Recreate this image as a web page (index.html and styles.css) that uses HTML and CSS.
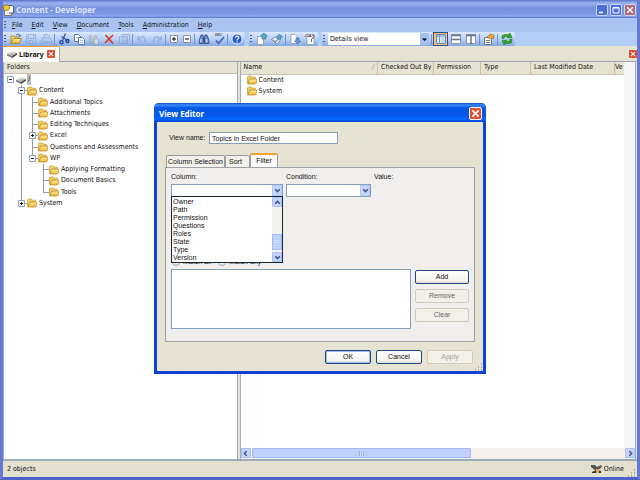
FILE: index.html
```html
<!DOCTYPE html>
<html lang="en">
<head>
<meta charset="utf-8">
<title>Content - Developer</title>
<link rel="stylesheet" href="styles.css">
</head>
<body>
<svg class="defs" aria-hidden="true">
  <defs>
    <linearGradient id="gold" x1="0" y1="0" x2="0" y2="1"><stop offset="0" stop-color="#fff3a8"/><stop offset="1" stop-color="#eeb32c"/></linearGradient>
    <symbol id="folder" viewBox="0 0 10 10"><path d="M.5 8.5V2L1.3 1h3l1 1.2h3V4H3L1.2 8.8z" fill="#f5cf62" stroke="#c8982c" stroke-width=".7"/><path d="M1 9 2.6 4.2 9.6 4 9.2 8.2 8.4 9z" fill="url(#gold)" stroke="#b88722" stroke-width=".7"/></symbol>
    <symbol id="drive" viewBox="0 0 10 10"><path d="M0 5 5 2.2 10 4 5 7z" fill="#b9b9b5"/><path d="M0 5 5 7v2L0 6.5z" fill="#777"/><path d="m5 7 5-3v1.8L5 9z" fill="#444"/><path d="m2.4 4.6 2.8-1.4 2 .8" stroke="#eee" fill="none"/></symbol>
    <symbol id="plus" viewBox="0 0 7 7"><path d="M.5.5h6v6h-6z" fill="#fff" stroke="#8aa4c0"/><path d="M2 3.5h3M3.5 2v3" stroke="#222"/></symbol>
    <symbol id="minus" viewBox="0 0 7 7"><path d="M.5.5h6v6h-6z" fill="#fff" stroke="#8aa4c0"/><path d="M2 3.5h3" stroke="#222"/></symbol>
    <symbol id="down" viewBox="0 0 7 7"><path d="m1.2 2.3 2.3 2.3 2.3-2.3" fill="none" stroke="#3d5385" stroke-width="1.5"/></symbol>
    <symbol id="close" viewBox="0 0 8 8"><path d="m1.2 1.2 5.6 5.6m0-5.6L1.2 6.8" stroke="#fff" stroke-width="1.4"/></symbol>
    <symbol id="page" viewBox="0 0 12 12"><path d="M1.5 3.5h4l2 2v6h-6z" fill="#fff" stroke="#8899ac" stroke-width=".8"/></symbol>
    <symbol id="grip" viewBox="0 0 8 8"><path d="M6 1h1M6 4h1M3 4h1M6 7h1M3 7h1M0 7h1" stroke="#9c9a88" stroke-width="1.4"/></symbol>
  </defs>
</svg>

<div class="window">
  <header class="titlebar">
    <svg class="app-icon" viewBox="0 0 11 12"><path d="M1.5 3.5h7v8h-7z" fill="#eee" stroke="#777"/><path d="M4 1.5h5l1.5 1.5v6H6" fill="#fff" stroke="#555"/><path d="M0 2 5 .8 7 4 5.5 6 1 6.5z" fill="#f5c52c" stroke="#8c6a10" stroke-width=".7"/></svg>
    <h1>Content - Developer</h1>
    <button class="win-btn" aria-label="Minimize"><svg viewBox="0 0 8 8"><path d="M1 6.5h4" stroke="#fff" stroke-width="1.6"/></svg></button>
    <button class="win-btn" aria-label="Maximize"><svg viewBox="0 0 8 8"><path d="M1 1.5h6v5.5H1zM1 2h6" fill="none" stroke="#fff"/></svg></button>
    <button class="win-btn dim-close" aria-label="Close"><svg viewBox="0 0 8 8"><use href="#close"/></svg></button>
  </header>

  <nav class="menubar">
    <i class="handle"></i>
    <button><u>F</u>ile</button><button><u>E</u>dit</button><button><u>V</u>iew</button><button><u>D</u>ocument</button><button><u>T</u>ools</button><button><u>A</u>dministration</button><button><u>H</u>elp</button>
  </nav>

  <div class="toolbars">
    <div class="toolbar">
      <i class="handle"></i>
      <button aria-label="Open"><svg viewBox="0 0 12 12"><path d="M1 10V3h3l1 1h4v2H4z" fill="#f7d56b" stroke="#a97b18" stroke-width=".8"/><path d="m1 10.5 2.5-5h8L9 10.5z" fill="url(#gold)" stroke="#a97b18" stroke-width=".8"/><path d="M6 2c2-1.6 4-.6 4 1m-1.3-.6L10 3.5l1-1.5" fill="none" stroke="#38659e"/></svg></button>
      <button aria-label="Save"><svg class="off" viewBox="0 0 12 12"><path d="M1.5 1.5h9v9h-9zM3.5 1.5v4h5v-4M4 10.5v-3h4v3" fill="#b3c6e8" stroke="#7e99c9"/></svg></button>
      <button aria-label="Save all"><svg class="off" viewBox="0 0 12 12"><path d="M2 5h8l1.500 2v3h-9zM4 5V1.500h4l1 1V5M4 8.500h6" fill="#bccdea" stroke="#7e99c9"/></svg></button>
      <i class="sep"></i>
      <button aria-label="Cut"><svg viewBox="0 0 12 12"><path d="m7.500.5-3 7M3.500 3.500l6 4" stroke="#2c55a8" stroke-width="1.300"/><circle cx="3.500" cy="9.200" r="1.600" fill="none" stroke="#173e96" stroke-width="1.300"/><circle cx="9.500" cy="8" r="1.500" fill="none" stroke="#173e96" stroke-width="1.300"/></svg></button>
      <button aria-label="Copy"><svg viewBox="0 0 12 12"><path d="M1.500 1.500h4l2 2v5h-6z" fill="#fff" stroke="#5278b5"/><path d="M5.500 4.500h4l2 2v5h-6z" fill="#fff" stroke="#5278b5"/><path d="M7 7.500h3M7 9.500h3M3 4.500h2" stroke="#7b9ccf" stroke-width=".7"/></svg></button>
      <button aria-label="Paste"><svg class="off" viewBox="0 0 12 12"><path d="M1.500 2.500h7v8h-7z" fill="#b8b8b0" stroke="#999"/><path d="M3.500 1.500h3v2h-3z" fill="#ddd"/><path d="M6 6h4.500v5.500H6z" fill="#eee" stroke="#999"/></svg></button>
      <button aria-label="Delete"><svg viewBox="0 0 12 12"><path d="m2.500 2 7.500 8.500M10 2 2 10" stroke="#d8381c" stroke-width="1.600"/></svg></button>
      <button aria-label="Properties"><svg class="off" viewBox="0 0 12 12"><path d="M1.500 3.500h8v7h-8zM3.500 1.500h8v7" fill="#bdcdea" stroke="#7790bd"/><circle cx="6" cy="7" r="2" fill="none" stroke="#7790bd"/></svg></button>
      <i class="sep"></i>
      <button aria-label="Undo"><svg class="off" viewBox="0 0 12 12"><path d="M2 3v4h4M2.500 6.500C5 2 11 4 9 9" fill="none" stroke="#6c8cc9" stroke-width="1.200"/></svg></button>
      <button aria-label="Redo"><svg class="off" viewBox="0 0 12 12"><path d="M10 3v4H6M9.500 6.500C7 2 1 4 3 9" fill="none" stroke="#6c8cc9" stroke-width="1.200"/></svg></button>
      <i class="sep"></i>
      <button class="narrow" aria-label="Expand"><svg viewBox="0 0 12 12"><path d="M2.500 2.500h7v7h-7z" fill="#fff" stroke="#8a8f94"/><path d="M4 6h4M6 4v4" stroke="#000"/></svg></button>
      <button class="narrow" aria-label="Collapse"><svg viewBox="0 0 12 12"><path d="M2.500 2.500h7v7h-7z" fill="#fff" stroke="#8a8f94"/><path d="M4 6h4" stroke="#000"/></svg></button>
      <i class="sep"></i>
      <button aria-label="Find"><svg viewBox="0 0 12 12"><path d="M3 2h2l.5 4v4.500H1.300V7zM7 2h2l1.800 5v3.500H6.500V6z" fill="#6f93cd" stroke="#27457c" stroke-width=".8"/><path d="M3 6 2.500 9M8.500 6l.5 3" stroke="#fff" stroke-width=".8"/><path d="M5 5h2" stroke="#27457c"/></svg></button>
      <button aria-label="Spelling"><span class="abc">ABC</span><svg viewBox="0 0 12 12"><path d="m3 7.500 2.500 3L11 4" fill="none" stroke="#3b66c8" stroke-width="1.700"/></svg></button>
      <i class="sep"></i>
      <button aria-label="Help"><svg viewBox="0 0 12 12"><circle cx="6" cy="6" r="5" fill="#235bd0" stroke="#e5edfa"/><path d="M4.500 4.800c0-2.200 3.200-2 3.200-.1C7.700 6 6 5.800 6 7.500M6 8.300v1.200" stroke="#fff" stroke-width="1.200" fill="none"/></svg></button>
    </div>
    <div class="toolbar">
      <i class="handle"></i>
      <button aria-label="Check in"><svg viewBox="0 0 12 12"><use href="#page"/><path d="M6 6V3H4.500L8 0l3.500 3H10v3z" fill="#5da6c9" stroke="#32728f" stroke-width=".6"/></svg></button>
      <button aria-label="Check in all"><svg viewBox="0 0 12 12"><path d="M.5 6.500 4 4l4 2-3 3zM3 8l3 3 3-3V4" fill="#edf0f3" stroke="#67798d" stroke-width=".8"/><path d="M7 6V4H5.500L8.500 1l3 3H10v2z" fill="#5da6c9" stroke="#32728f" stroke-width=".6"/></svg></button>
      <i class="sep"></i>
      <button aria-label="Check out"><svg viewBox="0 0 12 12"><path d="M2 1.500h4l2 2v7H2z" fill="#fff" stroke="#8899ac" stroke-width=".8"/><path d="M7 5v3H5.500L8.500 11 11.500 8H10V5z" fill="#5d9fd0" stroke="#32608f" stroke-width=".6"/></svg></button>
      <button aria-label="Undo check out"><svg viewBox="0 0 12 12"><path d="M3 3.500h5l2 2v6H3z" fill="#fff" stroke="#8899ac" stroke-width=".8"/><path d="M1 4c1-3 4-3 5-1M6.500 1v2.500H4" fill="none" stroke="#8a5a49"/><path d="M8 2h2v2.500L7.500 6v3" stroke="#444" stroke-width=".8" fill="none"/></svg></button>
    </div>
    <div class="toolbar views">
      <i class="handle"></i>
      <div class="combo view-combo">
        <select aria-label="View"><option>Details view</option></select>
        <span class="flat-arrow"><svg viewBox="0 0 7 7"><path d="M1 2.500h5L3.500 5z"/></svg></span>
      </div>
      <i class="sep"></i>
      <button class="pressed" aria-label="Folders pane"><svg viewBox="0 0 12 12"><path d="M1.500 1.500h9v9h-9z" fill="#dce8fa" stroke="#6d8bbd"/><path d="M4.500 2v9M2 3h9" stroke="#7891bd"/><path d="M6 5h4M6 7h4M6 9h4" stroke="#9db2d6" stroke-width=".6"/></svg></button>
      <button aria-label="Split horizontally"><svg viewBox="0 0 12 12"><path d="M1.500 1.500h9v9h-9z" fill="#fff" stroke="#8a97ab"/><path d="M1 2.500h10M1 6.500h10" stroke="#66758c" stroke-width="1.500"/></svg></button>
      <button aria-label="Split vertically"><svg viewBox="0 0 12 12"><path d="M1.500 1.500h9v9h-9z" fill="#fff" stroke="#8a97ab"/><path d="M1 2.500h10M6 2v9" stroke="#66758c" stroke-width="1.500"/></svg></button>
      <i class="sep"></i>
      <button aria-label="View properties"><svg viewBox="0 0 12 12"><path d="M1.500 4.500h7v7h-7z" fill="#fff" stroke="#6e7684"/><path d="M3 7.500h4M3 9.500h4" stroke="#6e7684"/><path d="M4 4 7 1l4 1v3L8 6z" fill="#eda934" stroke="#87622a" stroke-width=".6"/></svg></button>
      <i class="sep"></i>
      <button aria-label="Refresh"><svg viewBox="0 0 12 12"><path d="M1 5.500V3l2-1.500h4.500L9 0l2 4.500L6 5l1.500-1.500H4L3 5.500z" fill="#35a82b" stroke="#14731a" stroke-width=".5"/><path d="M11 6v3l-2 1.500H4.500L3 12 1 7.500 6 7 4.500 8.500H8L9 6z" fill="#35a82b" stroke="#14731a" stroke-width=".5"/></svg></button>
    </div>
  </div>

  <div class="doc-tabs">
    <div class="doc-tab"><svg class="ico"><use href="#drive"/></svg><strong>Library</strong><button class="red-x" aria-label="Close tab"><svg viewBox="0 0 8 8"><use href="#close"/></svg></button></div>
    <button class="red-x" aria-label="Close pane"><svg viewBox="0 0 8 8"><use href="#close"/></svg></button>
  </div>

  <main class="panes">
    <section class="folders">
      <h2 class="head">Folders</h2>
      <ul class="tree">
        <li><i class="g"><svg><use href="#minus"/></svg></i><svg class="ico"><use href="#drive"/></svg><span class="selected">/</span></li>
        <li><i class="g t"><svg><use href="#minus"/></svg></i><svg class="ico"><use href="#folder"/></svg><span>Content</span></li>
        <li><i class="g v"></i><i class="g t"></i><svg class="ico"><use href="#folder"/></svg><span>Additional Topics</span></li>
        <li><i class="g v"></i><i class="g t"></i><svg class="ico"><use href="#folder"/></svg><span>Attachments</span></li>
        <li><i class="g v"></i><i class="g t"></i><svg class="ico"><use href="#folder"/></svg><span>Editing Techniques</span></li>
        <li><i class="g v"></i><i class="g t"><svg><use href="#plus"/></svg></i><svg class="ico"><use href="#folder"/></svg><span>Excel</span></li>
        <li><i class="g v"></i><i class="g t"></i><svg class="ico"><use href="#folder"/></svg><span>Questions and Assessments</span></li>
        <li><i class="g v"></i><i class="g l"><svg><use href="#minus"/></svg></i><svg class="ico"><use href="#folder"/></svg><span>WP</span></li>
        <li><i class="g v"></i><i class="g"></i><i class="g t"></i><svg class="ico"><use href="#folder"/></svg><span>Applying Formatting</span></li>
        <li><i class="g v"></i><i class="g"></i><i class="g t"></i><svg class="ico"><use href="#folder"/></svg><span>Document Basics</span></li>
        <li><i class="g v"></i><i class="g"></i><i class="g l"></i><svg class="ico"><use href="#folder"/></svg><span>Tools</span></li>
        <li><i class="g l"><svg><use href="#plus"/></svg></i><svg class="ico"><use href="#folder"/></svg><span>System</span></li>
      </ul>
    </section>

    <section class="contents">
      <div class="list-area">
        <div class="list">
        <table>
          <colgroup><col class="c-name"><col class="c-out"><col class="c-perm"><col class="c-type"><col class="c-mod"><col></colgroup>
          <thead><tr><th><span class="sorted">Name<i>/</i></span></th><th>Checked Out By</th><th>Permission</th><th>Type</th><th>Last Modified Date</th><th>Ve</th></tr></thead>
          <tbody>
            <tr><td colspan="6"><span class="item"><svg class="ico"><use href="#folder"/></svg>Content</span></td></tr>
            <tr><td colspan="6"><span class="item"><svg class="ico"><use href="#folder"/></svg>System</span></td></tr>
          </tbody>
        </table>
        </div>
        <div class="vtrack"></div>
      </div>
      <div class="hscroll">
        <button class="sb" aria-label="Scroll left"><svg class="left" viewBox="0 0 7 7"><use href="#down"/></svg></button>
        <div class="track"><div class="thumb"><i></i></div></div>
        <button class="sb" aria-label="Scroll right"><svg class="right" viewBox="0 0 7 7"><use href="#down"/></svg></button>
      </div>
    </section>
  </main>

  <footer class="status">
    <span>2 objects</span>
    <span class="online"><svg viewBox="0 0 11 10"><path d="M0 1h4l2 2 4-2 1 2-4 3H4L0 3z" fill="#555"/><path d="m1 8 4-2 5 1v2H1z" fill="#333"/><path d="M5 5h3v4H5z" fill="#e8a43a"/></svg>Online</span>
    <svg class="size-grip"><use href="#grip"/></svg>
  </footer>
</div>

<div class="dialog" role="dialog" aria-labelledby="dlg-title">
  <header class="dlg-title">
    <h2 id="dlg-title">View Editor</h2>
    <button class="dlg-close" aria-label="Close"><svg viewBox="0 0 8 8"><use href="#close"/></svg></button>
  </header>
  <form class="dlg-body">
    <div class="name-row">
      <label for="view-name">View name:</label>
      <input id="view-name" type="text" value="Topics in Excel Folder">
    </div>
    <div class="tabs" role="tablist">
      <button type="button" role="tab" class="columns">Column Selection</button>
      <button type="button" role="tab" class="sort">Sort</button>
      <button type="button" role="tab" class="active" aria-selected="true">Filter</button>
    </div>
    <div class="tab-panel" role="tabpanel">
      <div class="criteria">
        <div class="field column-field">
          <label for="column">Column:</label>
          <div class="combo xp"><select id="column"><option></option></select><span class="xp-arrow"><svg><use href="#down"/></svg></span></div>
          <div class="dropdown">
            <ul role="listbox" aria-label="Columns">
              <li role="option">Owner</li><li role="option">Path</li><li role="option">Permission</li><li role="option">Questions</li><li role="option">Roles</li><li role="option">State</li><li role="option">Type</li><li role="option">Version</li>
            </ul>
            <div class="vscroll">
              <span class="sb"><svg class="up" viewBox="0 0 7 7"><use href="#down"/></svg></span>
              <span class="vthumb"></span>
              <span class="sb"><svg viewBox="0 0 7 7"><use href="#down"/></svg></span>
            </div>
          </div>
        </div>
        <div class="field cond-field">
          <label for="condition">Condition:</label>
          <div class="combo xp"><select id="condition"><option></option></select><span class="xp-arrow"><svg><use href="#down"/></svg></span></div>
        </div>
        <div class="field"><span>Value:</span></div>
      </div>
      <div class="match">
        <label><input type="radio" name="match" checked>Match all</label>
        <label><input type="radio" name="match">Match any</label>
      </div>
      <div class="filters">
        <div class="filter-list" role="listbox" aria-label="Filters"></div>
        <div class="side">
          <button type="button" class="btn">Add</button>
          <button type="button" class="btn muted">Remove</button>
          <button type="button" class="btn muted">Clear</button>
        </div>
      </div>
    </div>
    <div class="actions">
      <button type="button" class="btn default">OK</button>
      <button type="button" class="btn">Cancel</button>
      <button type="button" class="btn disabled" disabled>Apply</button>
    </div>
    <svg class="size-grip dlg-grip"><use href="#grip"/></svg>
  </form>
</div>
</body>
</html>
```
FILE: styles.css
```css
* { box-sizing: border-box; }
body { margin: 0; font: 7px/9px "DejaVu Sans Condensed", "Liberation Sans", sans-serif; color: #111; }
button, input, select { font: inherit; color: inherit; margin: 0; padding: 0; border: 0; background: none; }
button { white-space: nowrap; }
h1, h2, ul { margin: 0; padding: 0; list-style: none; }
svg { display: block; flex: none; }
.defs { position: absolute; width: 0; height: 0; }

.window { min-height: 100vh; display: flex; flex-direction: column; border: solid #6678d4; border-width: 0 3px 3px; border-bottom-color: #4d62c8; background: #e7e3d3; }

.titlebar { height: 18px; display: flex; align-items: center; gap: 2px; padding: 2px 1px 0 0; background: linear-gradient(#5972c8, #9cb3f1 3px, #7891dd 8px, #7d98e2 14px, #8eaaf0 16px, #5973c5); }
.app-icon { width: 11px; height: 12px; }
.titlebar h1 { flex: 1; font: bold 8px/12px "Noto Sans", sans-serif; color: #dce6fc; }
.win-btn { width: 12px; height: 12px; padding: 1px; border: 1px solid #c8d5f7; border-radius: 2px; background: #4b70db; }
.win-btn svg { width: 8px; height: 8px; }
.dim-close { background: #b26c7c; }

.menubar { height: 14px; display: flex; align-items: center; background: #a9c4f1; }
.menubar button { padding: 0 5px 0 4px; }
.menubar u { text-underline-offset: 1px; }
.handle { width: 2px; height: 9px; flex: none; margin: 0 2px 0 1px; background: repeating-linear-gradient(#465f92 0 1px, transparent 1px 3px); }

.toolbars { height: 14px; display: flex; gap: 4px; background: #b3cef4; }
.toolbar { display: flex; align-items: center; padding-right: 1px; border-radius: 0 2px 2px 0; background: linear-gradient(#dbe8fd, #b8d0f6 50%, #86a7e2); }
.toolbar button { width: 15px; height: 14px; display: grid; place-items: center; }
.toolbar button > * { grid-area: 1 / 1; }
.toolbar button svg { width: 12px; height: 12px; }
.toolbar .narrow { width: 13px; }
.toolbar .off { opacity: .55; }
.toolbar .pressed { background: #f8bc74; border: 1px solid #33508e; }
.sep { width: 1px; height: 11px; flex: none; margin: 0 1px; background: #7495d3; }
.abc { align-self: start; font-size: 4px; line-height: 6px; }
.combo { position: relative; display: flex; background: #fff; }
.combo select { appearance: none; width: 100%; padding: 0 10px 0 2px; outline: 0; }
.view-combo { width: 101px; height: 12px; margin: 0 1px; }
.flat-arrow { position: absolute; top: 0; right: 0; width: 9px; height: 12px; padding: 3px 1px; background: #a4c0f0; }
.flat-arrow svg { width: 7px; height: 7px; }

.doc-tabs { height: 16px; display: flex; justify-content: space-between; align-items: center; border-bottom: 1px solid #9ba5b0; background: #e7e3d3; }
.doc-tab { height: 16px; align-self: start; display: flex; align-items: center; gap: 2px; padding: 0 4px 1px; border-top: 1px solid #f09b2b; border-right: 1px solid #9ca2a8; border-radius: 0 2px 0 0; background: #fcfbf8; }
.doc-tab strong { font-family: "Noto Sans", sans-serif; margin-right: 1px; }
.red-x { width: 8px; height: 8px; border-radius: 1px; background: #df4b2e; }
.red-x svg { width: 8px; height: 8px; padding: 1px; }
.ico { width: 10px; height: 10px; }

.panes { flex: 1; display: flex; gap: 2px; border-bottom: 2px solid #9bacba; }
.folders { flex: 0 0 37%; border: solid #9aaebf; border-width: 0 1px; background: #fff; }
.head { height: 12px; padding: 1px 3px; font: inherit; background: #e7e3d3; border-bottom: 1px solid #c6bfae; }
.tree { height: 135px; display: grid; grid-auto-rows: 1fr; padding-left: 1px; }
.tree li { display: flex; align-items: center; }
.tree li:not(:first-child) { padding-left: 11px; }
.tree span { margin-left: 2px; white-space: nowrap; }
.tree .selected { margin-left: 1px; padding: 1px; background: #bdbcb7; }
.g { width: 11px; align-self: stretch; display: grid; place-items: center; flex: none; background-repeat: no-repeat; }
.g svg { width: 7px; height: 7px; }
.v { background-image: linear-gradient(#999, #999); background-size: 1px 100%; background-position: 5px 0; }
.t { background-image: linear-gradient(#999, #999), linear-gradient(#999, #999); background-size: 1px 100%, 6px 1px; background-position: 5px 0, 5px 5px; }
.l { background-image: linear-gradient(#999, #999), linear-gradient(#999, #999); background-size: 1px 6px, 6px 1px; background-position: 5px 0, 5px 5px; }

.contents { flex: 1; min-width: 0; display: flex; flex-direction: column; margin-right: 1px; border: solid #9aaebf; border-width: 0 1px; background: #fff; }
.list-area { flex: 1; display: flex; }
.list { flex: 1; min-width: 0; overflow: hidden; }
table { width: 100%; table-layout: fixed; border-collapse: collapse; }
th { height: 12px; padding: 0 0 0 3px; font-weight: normal; text-align: left; white-space: nowrap; overflow: hidden; background: #e7e3d3; border-bottom: 1px solid #c6bfae; }
th + th { border-left: 1px solid #c3bda9; }
th:last-child { padding-left: 0; }
td { padding: 0 0 0 6px; height: 11px; }
.c-name { width: 137px; } .c-out { width: 56px; } .c-perm { width: 47px; } .c-type { width: 50px; } .c-mod { width: 84px; }
.sorted { display: flex; justify-content: space-between; padding-right: 3px; }
.sorted i { color: #999; }
.item { display: flex; align-items: center; gap: 2px; height: 11px; }
.vtrack { width: 11px; background: #f5f4f7; }
.hscroll { height: 11px; display: flex; background: #f4f1ec; }
.sb { width: 10px; height: 10px; flex: none; display: grid; place-items: center; border: 1px solid #a9bfee; border-radius: 1px; background: #c3d3fc; }
.sb svg { width: 7px; height: 7px; }
.left { transform: rotate(90deg); } .right { transform: rotate(-90deg); } .up { transform: rotate(180deg); }
.track { flex: 1; padding: 0 1px; }
.thumb { width: 59%; height: 10px; display: grid; place-items: center; border: 1px solid #a5baf0; border-radius: 1px; background: #bfd0fa; }
.thumb i { width: 5px; height: 5px; background: repeating-linear-gradient(90deg, #98b2eb 0 1px, #d8e3ff 1px 2px); }

.status { height: 16px; display: flex; align-items: center; padding: 0 1px 0 4px; background: #e4e0cf; }
.status span:first-child { flex: 1; }
.online { display: flex; align-items: center; gap: 2px; margin-right: 4px; }
.online svg { width: 11px; height: 10px; }
.size-grip { width: 8px; height: 8px; }
.status .size-grip { align-self: end; }

.dialog { position: absolute; left: 154px; top: 103px; width: 332px; border: solid #0c42d8; border-width: 0 3px 3px; border-radius: 5px 5px 0 0; background: #e7e3d3; font-family: "Liberation Sans", sans-serif; line-height: 8px; }
.dlg-title { height: 19px; display: flex; align-items: center; justify-content: space-between; margin: 0 -3px; padding: 2px 4px 0 5px; border-radius: 5px 5px 0 0; background: linear-gradient(#0a4cd0, #3a8cfa 2px, #0557e2 5px, #0458ec 13px, #0368ff 16px, #0345c8); }
.dlg-title h2 { font: bold 8px/12px "Noto Sans", sans-serif; color: #fff; }
.dlg-close { width: 13px; height: 13px; padding: 1px; border: 1px solid #fff; border-radius: 2px; background: #dc5434; }
.dlg-close svg { width: 9px; height: 9px; }
.dlg-body { position: relative; padding: 10px 8px 7px; }
.name-row { display: flex; align-items: center; padding-left: 4px; }
.name-row label { width: 40px; }
.name-row input { width: 129px; height: 12px; padding: 0 2px; border: 1px solid #849fba; background: #fff; }
.tabs { display: flex; align-items: end; margin-top: 9px; padding-left: 1px; }
.tabs button { height: 12px; padding: 0 3px; border: 1px solid #989c9e; border-bottom: 0; border-radius: 2px 2px 0 0; background: #f3f1e9; }
.tabs .columns { width: 59px; padding: 0 1px; }
.tabs .sort { width: 25px; text-align: left; }
.tabs .active { width: 28px; height: 14px; border-top: 2px solid #f3a52e; background: #fbfaf8; }
.tab-panel { padding: 5px 5px 12px; border: 1px solid #9ca4a8; background: #f1efee; }
.criteria { display: flex; gap: 3px; }
.field { display: flex; flex-direction: column; gap: 3px; }
.column-field { position: relative; width: 112px; }
.cond-field { width: 85px; }
.xp { height: 13px; border: 1px solid #849fba; }
.xp-arrow { position: absolute; top: 0; right: 0; width: 10px; height: 11px; display: grid; place-items: center; border: 1px solid #b5c9f5; background: #c3d5fb; }
.xp-arrow svg { width: 7px; height: 7px; }
.dropdown { position: absolute; z-index: 1; left: 0; right: 0; top: 23px; display: flex; border: 1px solid #1b2633; background: #fff; }
.dropdown ul { flex: 1; padding: 1px 0 0 1px; }
.dropdown li { height: 8px; }
.vscroll { width: 10px; display: flex; flex-direction: column; justify-content: space-between; background: #f3f1ee; }
.vthumb { height: 16px; margin-top: auto; margin-bottom: 2px; border: 1px solid #a5baf0; background: repeating-linear-gradient(#d8e3ff 0 1px, #b9ccfa 1px 2px) center / 4px 4px no-repeat, #bfd0fa; }
.match { display: flex; gap: 7px; margin-top: 61px; height: 8px; padding-left: 1px; }
.match label { display: flex; align-items: center; gap: 3px; }
.match input { appearance: none; width: 8px; height: 8px; border: 1px solid #9aa5ad; border-radius: 50%; }
.filters { display: flex; gap: 4px; margin-top: 3px; }
.filter-list { width: 240px; height: 60px; border: 1px solid #849fba; background: #fff; }
.side { display: flex; flex-direction: column; gap: 5px; flex: 1; padding-top: 1px; }
.btn { height: 14px; border: 1px solid #1f4a80; border-radius: 2px; background: linear-gradient(#fff, #f4f3ee 80%, #dcd8cb); }
.side .btn { width: 54px; }
.default { box-shadow: inset 0 0 0 1px #9db9ec; }
.muted, .disabled { border-color: #cdcbb9; background: #f2f0e7; color: #666; }
.disabled { color: #a6a495; }
.actions { display: flex; justify-content: flex-end; gap: 5px; margin: 8px 2px 0 0; }
.actions .btn { width: 46px; }
.dlg-grip { position: absolute; right: 0; bottom: 0; }
```
